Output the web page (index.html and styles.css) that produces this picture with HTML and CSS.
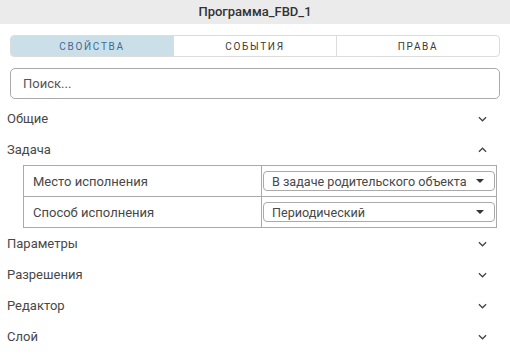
FILE: index.html
```html
<!DOCTYPE html>
<html lang="ru">
<head>
  <meta charset="UTF-8" />
  <title>Программа_FBD_1</title>
  <link rel="stylesheet" href="styles.css">
</head>
<body>
  <div class="panel">
    <div class="panel-title">Программа_FBD_1</div>

    <div class="tabs">
      <div class="tab active">СВОЙСТВА</div>
      <div class="tab">СОБЫТИЯ</div>
      <div class="tab">ПРАВА</div>
    </div>

    <div class="search">
      <input type="text" placeholder="Поиск..." />
    </div>

    <div class="sections">
      <div class="section-head">
        <span>Общие</span>
        <svg class="chev" viewBox="0 0 10 6"><path d="M1 1l4 4 4-4"/></svg>
      </div>

      <div class="section-head">
        <span>Задача</span>
        <svg class="chev" viewBox="0 0 10 6"><path d="M1 5l4-4 4 4"/></svg>
      </div>
      <table class="props">
        <tr>
          <td class="prop-name">Место исполнения</td>
          <td class="prop-value">
            <div class="select">
              <span>В задаче родительского объекта</span>
              <svg class="caret" viewBox="0 0 8 4"><path d="M0 0h8L4 4z"/></svg>
            </div>
          </td>
        </tr>
        <tr>
          <td class="prop-name">Способ исполнения</td>
          <td class="prop-value">
            <div class="select">
              <span>Периодический</span>
              <svg class="caret" viewBox="0 0 8 4"><path d="M0 0h8L4 4z"/></svg>
            </div>
          </td>
        </tr>
      </table>

      <div class="section-head">
        <span>Параметры</span>
        <svg class="chev" viewBox="0 0 10 6"><path d="M1 1l4 4 4-4"/></svg>
      </div>
      <div class="section-head">
        <span>Разрешения</span>
        <svg class="chev" viewBox="0 0 10 6"><path d="M1 1l4 4 4-4"/></svg>
      </div>
      <div class="section-head">
        <span>Редактор</span>
        <svg class="chev" viewBox="0 0 10 6"><path d="M1 1l4 4 4-4"/></svg>
      </div>
      <div class="section-head">
        <span>Слой</span>
        <svg class="chev" viewBox="0 0 10 6"><path d="M1 1l4 4 4-4"/></svg>
      </div>
    </div>
  </div>
</body>
</html>
```

FILE: styles.css
```css
:root {
  --text:        #484848;
  --title-bg:    #ebebeb;
  --tab-border:  #dcdcdc;
  --tab-active:  #cbdfe9;
  --tab-blue:    #3f6b96;
  --line:        #aaa;
}
* { box-sizing: border-box; margin: 0; padding: 0; }
body {
  background: #fff;
  font-family: Roboto, 'Liberation Sans', sans-serif;
  color: var(--text);
}
.panel { width: 510px; }

.panel-title {
  height: 24px;
  line-height: 24px;
  background: var(--title-bg);
  text-align: center;
  font-size: 13px;
  font-weight: 500;
  color: #333;
}

/* tabs */
.tabs {
  display: flex;
  margin: 11px 10px 0;
  height: 22px;
  border: 1px solid var(--tab-border);
  border-radius: 4px;
  overflow: hidden;
}
.tab {
  flex: 1;
  display: flex;
  align-items: center;
  justify-content: center;
  font-size: 10px;
  letter-spacing: 1.7px;
  color: #3a3a3a;
}
.tab + .tab { border-left: 1px solid var(--tab-border); }
.tab.active {
  background: var(--tab-active);
  color: var(--tab-blue);
}

/* search */
.search { margin: 11px 10px 4px; }
.search input {
  width: 100%;
  height: 31px;
  padding: 0 12px;
  border: 1px solid var(--line);
  border-radius: 5px;
  font-family: inherit;
  font-size: 13px;
  color: var(--text);
}
.search input::placeholder { color: #555; }

/* sections */
.section-head {
  display: flex;
  align-items: center;
  justify-content: space-between;
  height: 31px;
  padding: 0 23px 0 7px;
  font-size: 13px;
}
.chev {
  width: 9px; height: 6px;
  fill: none;
  stroke: #444;
  stroke-width: 1.4;
}

.props {
  width: 474px;
  margin-left: 23px;
  border-collapse: collapse;
  font-size: 13px;
}
.props td {
  border: 1px solid var(--line);
  height: 31px;
}
.prop-name { width: 238px; padding-left: 9px; }
.prop-value { padding: 0 1px; }
.select {
  display: flex;
  align-items: center;
  justify-content: space-between;
  height: 20px;
  padding: 0 10px 0 8px;
  border: 1px solid var(--line);
  border-radius: 4px;
  font-size: 12.6px;
}
.caret { width: 8px; height: 4px; fill: #333; }
```
